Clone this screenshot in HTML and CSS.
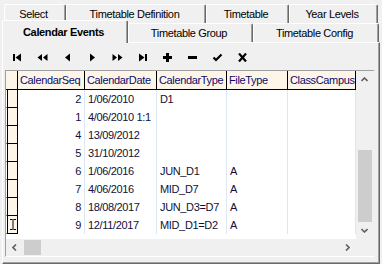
FILE: index.html
```html
<!DOCTYPE html>
<html>
<head>
<meta charset="utf-8">
<link rel="stylesheet" href="styles.css">
</head>
<body>
<div class="tabs">
  <div class="tabrow row1">
    <div class="tab w-select">Select</div>
    <div class="tab w-def">Timetable Definition</div>
    <div class="tab w-tt">Timetable</div>
    <div class="tab w-yl">Year Levels</div>
  </div>
  <div class="tabrow row2">
    <div class="tab active w-ce">Calendar Events</div>
    <div class="tab w-tg">Timetable Group</div>
    <div class="tab w-tc">Timetable Config</div>
  </div>
</div>
<div class="panel">
  <div class="toolbar">
    <div class="btn"><svg width="11" height="9" viewBox="0 0 11 9"><rect x="1" y="1" width="2" height="7"/><polygon points="9,0.5 3.5,4.5 9,8.5"/></svg></div>
    <div class="btn"><svg width="11" height="9" viewBox="0 0 11 9"><polygon points="5,1 0.5,4.5 5,8"/><polygon points="10.5,1 6,4.5 10.5,8"/></svg></div>
    <div class="btn"><svg width="11" height="9" viewBox="0 0 11 9"><polygon points="8,0.5 3,4.5 8,8.5"/></svg></div>
    <div class="btn"><svg width="11" height="9" viewBox="0 0 11 9"><polygon points="3,0.5 8,4.5 3,8.5"/></svg></div>
    <div class="btn"><svg width="11" height="9" viewBox="0 0 11 9"><polygon points="0.5,1 5,4.5 0.5,8"/><polygon points="6,1 10.5,4.5 6,8"/></svg></div>
    <div class="btn"><svg width="11" height="9" viewBox="0 0 11 9"><polygon points="2,0.5 7.5,4.5 2,8.5"/><rect x="8" y="1" width="2" height="7"/></svg></div>
    <div class="btn"><svg width="11" height="9" viewBox="0 0 11 9"><rect x="4" y="0" width="3" height="9"/><rect x="1" y="3" width="9" height="3"/></svg></div>
    <div class="btn"><svg width="11" height="9" viewBox="0 0 11 9"><rect x="1" y="3" width="9" height="3"/></svg></div>
    <div class="btn"><svg width="11" height="9" viewBox="0 0 11 9"><polyline points="1.5,4.5 4,7 9.5,1.5" fill="none" stroke="#000" stroke-width="2.2"/></svg></div>
    <div class="btn"><svg width="11" height="9" viewBox="0 0 11 9"><path d="M2 0.5 L9 8.5 M9 0.5 L2 8.5" stroke="#000" stroke-width="2.2"/></svg></div>
  </div>
  <div class="grid">
    <div class="main">
      <div class="trow head">
        <div class="ind"></div>
        <div class="hc">CalendarSeq</div>
        <div class="hc">CalendarDate</div>
        <div class="hc">CalendarType</div>
        <div class="hc">FileType</div>
        <div class="hc">ClassCampus</div>
      </div>
      <div class="trow"><div class="ind"></div><div class="c num">2</div><div class="c">1/06/2010</div><div class="c">D1</div><div class="c"></div><div class="c"></div></div>
      <div class="trow"><div class="ind"></div><div class="c num">1</div><div class="c clip">4/06/2010 1:1</div><div class="c"></div><div class="c"></div><div class="c"></div></div>
      <div class="trow"><div class="ind"></div><div class="c num">4</div><div class="c">13/09/2012</div><div class="c"></div><div class="c"></div><div class="c"></div></div>
      <div class="trow"><div class="ind"></div><div class="c num">5</div><div class="c">31/10/2012</div><div class="c"></div><div class="c"></div><div class="c"></div></div>
      <div class="trow"><div class="ind"></div><div class="c num">6</div><div class="c">1/06/2016</div><div class="c">JUN_D1</div><div class="c">A</div><div class="c"></div></div>
      <div class="trow"><div class="ind"></div><div class="c num">7</div><div class="c">4/06/2016</div><div class="c">MID_D7</div><div class="c">A</div><div class="c"></div></div>
      <div class="trow"><div class="ind"></div><div class="c num">8</div><div class="c">18/08/2017</div><div class="c">JUN_D3=D7</div><div class="c">A</div><div class="c"></div></div>
      <div class="trow"><div class="ind cur"><svg width="8" height="13" viewBox="0 0 8 13"><path d="M1 1.5h2.5M4.5 1.5h2.5M4 1.5v10M1 11.5h2.5M4.5 11.5h2.5" stroke="#000" stroke-width="1" fill="none"/></svg></div><div class="c num">9</div><div class="c">12/11/2017</div><div class="c">MID_D1=D2</div><div class="c">A</div><div class="c"></div></div>
    </div>
    <div class="vscroll">
      <div class="sbtn"><svg width="7" height="5" viewBox="0 0 7 5"><polyline points="0.5,4 3.5,1 6.5,4" fill="none" stroke="#606060" stroke-width="1.6"/></svg></div>
      <div class="vtrack"><div class="vthumb"></div></div>
      <div class="sbtn"><svg width="7" height="5" viewBox="0 0 7 5"><polyline points="0.5,1 3.5,4 6.5,1" fill="none" stroke="#606060" stroke-width="1.6"/></svg></div>
    </div>
    <div class="hscroll">
      <div class="sbtn"><svg width="5" height="7" viewBox="0 0 5 7"><polyline points="4,0.5 1,3.5 4,6.5" fill="none" stroke="#606060" stroke-width="1.6"/></svg></div>
      <div class="hthumb"></div>
      <div class="htrack"></div>
      <div class="sbtn"><svg width="5" height="7" viewBox="0 0 5 7"><polyline points="1,0.5 4,3.5 1,6.5" fill="none" stroke="#606060" stroke-width="1.6"/></svg></div>
    </div>
    <div class="corner"></div>
  </div>
</div>
</body>
</html>
```

FILE: styles.css
```css
* { box-sizing: border-box; }
html, body { margin: 0; padding: 0; }
body {
  width: 382px;
  height: 264px;
  overflow: hidden;
  background: #f0f0f0;
  font: 11px "Liberation Sans", Arial, sans-serif;
  letter-spacing: -0.35px;
  color: #000;
}
.tabs { padding-top: 4px; }
.tabrow { display: flex; }
.row1 { height: 19px; padding-left: 4px; }
.row2 { height: 19px; padding-left: 2px; }
.tab {
  height: 100%;
  display: flex;
  align-items: center;
  justify-content: center;
  background: #f0f0f0;
  border-top: 1px solid #fff;
  border-left: 1px solid #fff;
  border-right: 1px solid #696969;
  box-shadow: inset -1px 0 0 #a0a0a0;
  border-radius: 2px 2px 0 0;
  white-space: nowrap;
  padding-right: 3px;
}
.w-select { width: 62px; }
.w-def { width: 140px; }
.w-tt { width: 83px; }
.w-yl { width: 89px; }
.w-ce { width: 126px; }
.w-tg { width: 125px; }
.w-tc { width: 126px; }
.tab.active {
  font-weight: bold;
  margin-top: -3px;
  height: 23px;
  padding-bottom: 1px;
  position: relative;
  z-index: 1;
}
.panel {
  margin: 0 2px;
  height: 222px;
  border-top: 1px solid #fff;
  border-left: 1px solid #fff;
  border-right: 1px solid #696969;
  border-bottom: 1px solid #696969;
  box-shadow: inset -1px -1px 0 #a0a0a0;
  padding-left: 2px;
}
.toolbar {
  display: flex;
  height: 22px;
  margin-top: 3px;
}
.btn {
  width: 25px;
  height: 22px;
  display: flex;
  align-items: center;
  justify-content: center;
}
.btn svg { fill: #000; display: block; }
.grid {
  margin-top: 2px;
  width: 370px;
  display: grid;
  grid-template-columns: 350px 17px;
  grid-template-rows: 168px 17px;
  border-top: 1px solid #a0a0a0;
  border-left: 1px solid #a0a0a0;
  border-right: 2px solid #f0f0f0;
  border-bottom: 1px solid #fff;
}
.main {
  background: #fff;
  overflow: hidden;
}
.trow {
  display: grid;
  grid-template-columns: 12px 67px 72px 70px 61px 68px;
  height: 18px;
}
.trow.head { height: 19px; }
.ind {
  background: #fdf6e8;
  border-right: 1px solid #000;
  border-bottom: 1px solid #000;
}
.trow:not(.head) .ind {
  border-left: 1px solid #fff;
  box-shadow: inset 1px 0 0 #000;
}
.ind.cur { display: flex; align-items: center; justify-content: center; padding-left: 1px; }
.ind.cur svg { display: block; }
.hc {
  background: #fdf6e8;
  border-right: 1px solid #000;
  border-bottom: 1px solid #000;
  color: #0a0a6e;
  padding-left: 2px;
  line-height: 18px;
  white-space: nowrap;
  overflow: hidden;
}
.c {
  border-right: 1px solid #dbe7f5;
  color: #101038;
  padding-left: 3px;
  line-height: 18px;
  white-space: nowrap;
  overflow: hidden;
}
.c.num { text-align: right; padding-right: 3px; padding-left: 0; }
.vscroll {
  background: #f0f0f0;
  display: flex;
  flex-direction: column;
}
.sbtn {
  width: 17px;
  height: 17px;
  flex: none;
  display: flex;
  align-items: center;
  justify-content: center;
}
.sbtn svg { display: block; }
.vtrack {
  flex: 1;
  display: flex;
  flex-direction: column;
  justify-content: flex-end;
}
.vthumb {
  height: 72px;
  margin: 0 1px 0 2px;
  background: #cdcdcd;
}
.hscroll {
  background: #f0f0f0;
  display: flex;
  align-items: center;
}
.hthumb {
  width: 17px;
  height: 15px;
  margin-left: 1px;
  background: #cdcdcd;
}
.htrack { flex: 1; }
.corner { background: #f0f0f0; }
```
